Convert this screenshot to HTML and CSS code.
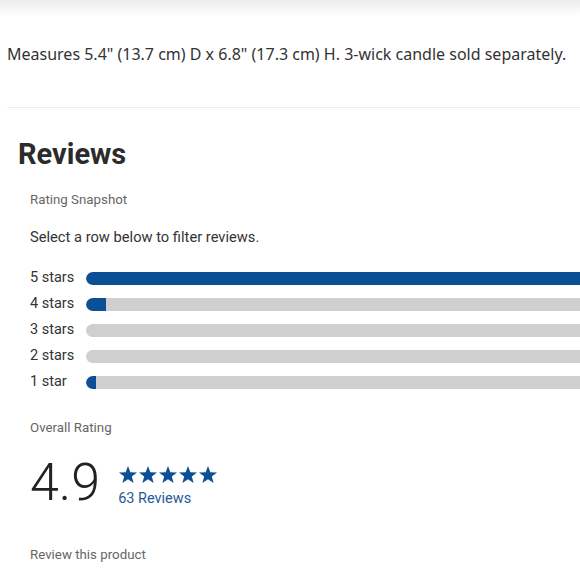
FILE: index.html
```html
<!DOCTYPE html>
<html>
<head>
<meta charset="utf-8">
<link rel="stylesheet" href="styles.css">
</head>
<body>
<div class="topband"></div>
<p class="desc">Measures 5.4" (13.7 cm) D x 6.8" (17.3 cm) H. 3-wick candle sold separately.</p>
<div class="divider"></div>
<section class="reviews">
  <h2 class="title">Reviews</h2>
  <div class="inner">
    <div class="label">Rating Snapshot</div>
    <div class="hint">Select a row below to filter reviews.</div>
    <div class="rows">
      <div class="row"><span class="rlabel">5 stars</span><span class="bar"><span class="fill" style="width:98%"></span></span></div>
      <div class="row"><span class="rlabel">4 stars</span><span class="bar"><span class="fill" style="width:20px"></span></span></div>
      <div class="row"><span class="rlabel">3 stars</span><span class="bar"></span></div>
      <div class="row"><span class="rlabel">2 stars</span><span class="bar"></span></div>
      <div class="row"><span class="rlabel">1 star</span><span class="bar"><span class="fill" style="width:10px"></span></span></div>
    </div>
    <div class="label overall">Overall Rating</div>
    <div class="score">
      <span class="big">4.9</span>
      <div class="meta">
        <svg class="stars" width="100" height="17" viewBox="0 0 100 17" aria-label="5 stars">
          <defs>
            <polygon id="st" points="10,0 12.35,6.2 19,6.5 13.8,10.6 15.6,17 10,13.3 4.4,17 6.2,10.6 1,6.5 7.65,6.2"/>
          </defs>
          <use href="#st" x="0"/>
          <use href="#st" x="20"/>
          <use href="#st" x="40"/>
          <use href="#st" x="60"/>
          <use href="#st" x="80"/>
        </svg>
        <div class="count">63 Reviews</div>
      </div>
    </div>
    <div class="label write">Review this product</div>
  </div>
</section>
</body>
</html>
```
FILE: styles.css
```css
html, body {
  margin: 0;
  padding: 0;
  background: #fff;
  overflow: hidden;
  width: 580px;
  height: 580px;
}
body {
  font-family: Roboto, "Liberation Sans", sans-serif;
  color: #333;
}
.topband {
  height: 16px;
  background: linear-gradient(to bottom, #ececec, #fff);
}
.desc {
  margin: 27px 0 0 7px;
  font-family: "Noto Sans", sans-serif;
  font-size: 16px;
  line-height: 22px;
  color: #333;
  white-space: nowrap;
}
.divider {
  margin: 42px 0 0 7px;
  height: 1px;
  background: #ececec;
}
.reviews {
  padding-left: 18px;
}
.title {
  margin: 29px 0 0 0;
  font-size: 29px;
  line-height: 34px;
  font-weight: 700;
  color: #2b2b2b;
}
.inner {
  padding-left: 12px;
}
.label {
  font-size: 13.3px;
  line-height: 16px;
  color: #666;
}
.inner > .label:first-child {
  margin-top: 21px;
}
.hint {
  margin-top: 20px;
  font-size: 14.7px;
  line-height: 18px;
  color: #333;
}
.rows {
  margin-top: 25px;
  display: flex;
  flex-direction: column;
  gap: 12px;
}
.row {
  display: flex;
  align-items: center;
  height: 14px;
}
.rlabel {
  width: 56px;
  flex: none;
  font-size: 14.5px;
  line-height: 14px;
  color: #333;
}
.bar {
  flex: none;
  width: 560px;
  height: 13px;
  border-radius: 7px;
  background: #cfcfcf;
  overflow: hidden;
  display: flex;
}
.fill {
  height: 100%;
  background: #0b4f97;
  border-radius: 7px 0 0 7px;
}
.overall {
  margin-top: 31px;
}
.score {
  margin-top: 21px;
  display: flex;
  align-items: flex-start;
  gap: 18px;
}
.big {
  font-size: 52px;
  line-height: 52px;
  font-weight: 300;
  color: #222;
}
.meta {
  margin-top: 9px;
  display: flex;
  flex-direction: column;
  gap: 7px;
}
.stars {
  display: block;
  fill: #0b4f97;
}
.count {
  font-size: 14.5px;
  line-height: 18px;
  color: #1f5a97;
}
.write {
  margin-top: 38px;
}
```
